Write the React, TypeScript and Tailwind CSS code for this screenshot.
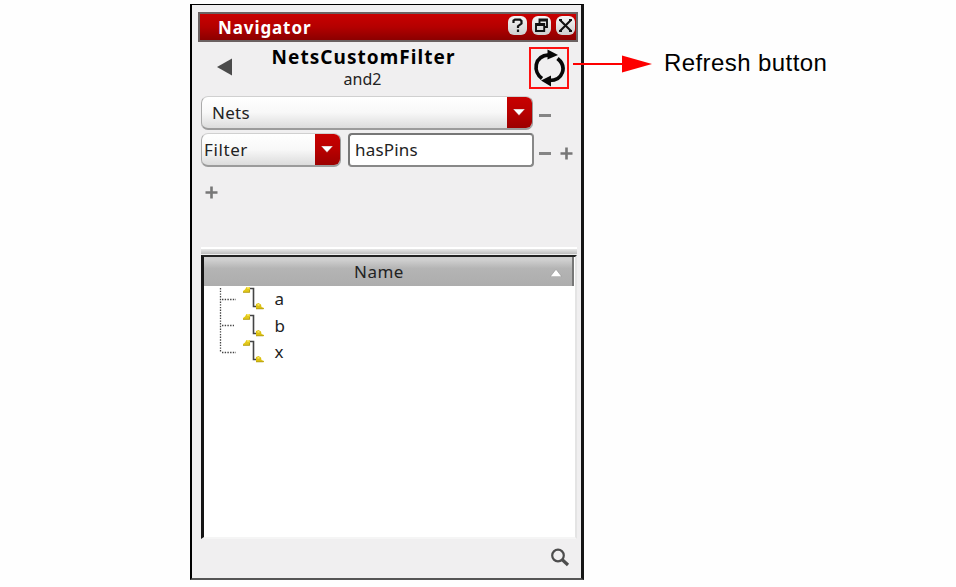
import React from "react";

function ComboArrow() {
  return (
    <div className="flex h-full w-[25px] shrink-0 items-center justify-center rounded-r-[6px] bg-linear-to-b from-[#c80000] via-[#b80000] to-[#9c0000]">
      <svg width="12" height="7" viewBox="0 0 12 7" className="-translate-x-px">
        <path d="M0 0H12L6 6.5Z" fill="#fff" stroke="#8a2020" strokeWidth="0.4" />
      </svg>
    </div>
  );
}

function Minus() {
  return <div className="h-[3px] w-[12px] bg-[#858585]" />;
}

function Plus() {
  return (
    <svg width="13" height="13" viewBox="0 0 13 13" className="block shrink-0">
      <path d="M0.5 6.5H12.5M6.5 0.5V12.5" stroke="#777" strokeWidth="2.6" />
    </svg>
  );
}

function TitleButton({ children }: { children: React.ReactNode }) {
  return (
    <div className="flex h-[19px] w-[19px] items-center justify-center rounded-[6px] bg-linear-to-b from-[#f6f6f6] to-[#cfcfcf]">
      <svg width="19" height="19" viewBox="0 0 19 19" fill="none" stroke="#111" strokeWidth="2">
        {children}
      </svg>
    </div>
  );
}

function NetIcon() {
  return (
    <svg width="22" height="26" viewBox="0 0 22 26" className="block shrink-0">
      <path d="M6.5 2.5H10.5V20.5H14" fill="none" stroke="#444" strokeWidth="1.6" />
      <path d="M0 6.5V5L2 3.5L3.5 1H7V6.5Z" fill="#e3c818" />
      <path d="M13 23V18L15.5 17L18 18.5L18.5 21L21 22V23Z" fill="#dcc010" />
      <path d="M4 1.8H6.5M14.5 18.8H16.5" stroke="#fff27a" strokeWidth="1.2" />
      <path d="M0 6.3H6.6V4M13 22.8H20.5" fill="none" stroke="#a99518" strokeWidth="0.8" />
    </svg>
  );
}

function Tree() {
  return (
    <div className="flex">
      <svg width="39" height="80" viewBox="0 0 39 80" className="block shrink-0">
        <path
          d="M16.5 2V66M18 13.5H32M18 39.5H30M18 66.5H32"
          fill="none"
          stroke="#444"
          strokeWidth="1.3"
          strokeDasharray="1.4 1.3"
        />
      </svg>
      <div className="flex flex-col">
        {["a", "b", "x"].map((name) => (
          <div key={name} className="flex h-[26.6px]">
            <NetIcon />
            <span className="ml-[9.5px] text-[17px] leading-[25px] text-[#222]">{name}</span>
          </div>
        ))}
      </div>
    </div>
  );
}

export default function App() {
  return (
    <div className="flex h-[587px] w-[956px] items-start overflow-hidden bg-[#fefefe] pt-[4px] pl-[190px] font-['Noto_Sans','Open_Sans',sans-serif] text-[#222]">
      <div className="flex h-[576px] w-[394px] shrink-0 flex-col border-t border-r-[3px] border-b-2 border-l-2 border-t-black border-r-[#161616] border-b-[#555] border-l-black bg-[#f0eff0] pt-[7px]">
        <div className="ml-[6px] flex h-[30px] w-[380px] items-center border-2 border-[#6b6262] bg-linear-to-b from-[#c90000] via-[#b40000] to-[#8b0000] pr-px pl-[18px]">
          <span className="text-[17px] leading-none font-bold tracking-[0.9px] text-white">Navigator</span>
          <div className="ml-auto flex -translate-y-[2px] gap-[5px]">
            <TitleButton>
              <path d="M5.5 7V4.6L7 3.6H12L13.5 5V7.5L10 10.2V12M10 13.5V16" strokeWidth="2.2" />
            </TitleButton>
            <TitleButton>
              <path d="M7.5 7V3.5H15V11H12.5M4 8H12.2V15H4ZM7 4.5H15.5M3.5 9H12.5" strokeWidth="1.9" />
            </TitleButton>
            <TitleButton>
              <path d="M4 4L15 15M15 4L4 15M3 4H6M13 4H16M3 15H6M13 15H16" strokeWidth="2.1" />
            </TitleButton>
          </div>
        </div>

        <div className="flex h-[54px] pt-[5px]">
          <svg width="16" height="18" viewBox="0 0 16 18" className="mt-[11px] ml-[25px] shrink-0">
            <path d="M0 9L15 0.5V17.5Z" fill="#4b4b4b" />
          </svg>
          <div className="ml-[23px] flex w-[215px] flex-col items-center">
            <span className="text-[19px] leading-[21px] font-bold tracking-[1.05px] text-black">NetsCustomFilter</span>
            <span className="-translate-x-px text-[16px] leading-[22px]">and2</span>
          </div>
          <div className="ml-[58px] flex h-[42px] w-[40px] shrink-0 items-center justify-center border-2 border-[#fd1010]">
            <svg width="36" height="38" viewBox="0 0 36 38" className="shrink-0" fill="none" stroke="#080808" strokeWidth="3.7">
              <path d="M11 29.5C2 23 2.5 7 18 5.8" />
              <path d="M26.5 9.5C36.5 17.5 32 31.5 18.5 31.5" />
              <path d="M16.5 0.5L27 6L16.5 10.5ZM20 26.5L10 31.5L20 37.5Z" fill="#080808" stroke="none" />
            </svg>
          </div>
        </div>

        <div className="ml-[9px] flex h-[34px] items-center">
          <div className="flex h-[34px] w-[332px] items-center rounded-[7px] border border-t-[#d0d0d0] border-r-[#999] border-b-2 border-b-[#9b9b9b] border-l-[#aaa] bg-linear-to-b from-white via-[#f8f8f8] to-[#dcdcdc]">
            <span className="ml-[10px] flex-1 text-[17px] leading-none tracking-[0.3px]">Nets</span>
            <ComboArrow />
          </div>
          <div className="mt-[5px] ml-[6px]">
            <Minus />
          </div>
        </div>

        <div className="mt-[3px] ml-[9px] flex h-[34px] items-center">
          <div className="flex h-[34px] w-[140px] items-center rounded-[7px] border border-t-[#d0d0d0] border-r-[#999] border-b-2 border-b-[#9b9b9b] border-l-[#aaa] bg-linear-to-b from-white via-[#f8f8f8] to-[#dcdcdc]">
            <span className="ml-[2px] flex-1 text-[17px] leading-none tracking-[0.6px]">Filter</span>
            <ComboArrow />
          </div>
          <div className="ml-[7px] flex h-[34px] w-[186px] items-center rounded-[4px] border-2 border-t-[#777] border-r-[#888] border-b-[#888] border-l-[#777] bg-white">
            <span className="ml-[5px] -translate-y-px text-[17px] leading-none tracking-[0.2px]">hasPins</span>
          </div>
          <div className="mt-[6px] ml-[5px] flex items-center gap-[9px]">
            <Minus />
            <Plus />
          </div>
        </div>

        <div className="mt-[19px] ml-[13px] h-[13px]">
          <Plus />
        </div>

        <div className="mt-[48px] ml-[9px] h-[8px] w-[376px] border-t-2 border-b border-t-white border-b-[#eee] bg-linear-to-b from-[#e8e8e8] to-[#bdbdbd]" />

        <div className="ml-[9px] h-[284px] w-[376px] border-t-2 border-r-2 border-b-2 border-l-[3px] border-t-[#222] border-r-[#e4e4e4] border-b-[#f5f5f5] border-l-[#151515] bg-white">
          <div className="flex h-[29px] w-[370px] items-center border-r-2 border-r-[#777] bg-linear-to-b from-[#cfcfcf] from-10% via-[#b4b4b4] via-40% to-[#adadad]">
            <span className="ml-[150px] text-[17px] leading-none tracking-[0.5px]">Name</span>
            <svg width="12" height="8" viewBox="0 0 12 8" className="mt-[2px] mr-[10px] ml-auto">
              <path d="M0.2 7.7L6 0.3L11.8 7.7Z" fill="#fff" stroke="#888" strokeWidth="0.5" />
            </svg>
          </div>
          <Tree />
        </div>

        <div className="mt-[9px] flex justify-end pr-[11px]">
          <svg width="20" height="19" viewBox="0 0 20 19" fill="none" stroke="#4d4d4d">
            <circle cx="8" cy="7.5" r="5.8" strokeWidth="2.2" />
            <path d="M12 11.5L18 17" strokeWidth="3.2" />
          </svg>
        </div>
      </div>

      <div className="-ml-[11px] flex items-center pt-[44px]">
        <svg width="79" height="18" viewBox="0 0 79 18" className="block shrink-0 translate-y-px">
          <path d="M0 9H50" stroke="#fd0000" strokeWidth="2" />
          <path d="M49 0.5L79 9L49 17.5Z" fill="#fd0000" />
        </svg>
        <span className="ml-[12px] font-['Liberation_Sans',sans-serif] text-[24px] leading-[30px] tracking-[0.42px] whitespace-nowrap text-black">
          Refresh button
        </span>
      </div>
    </div>
  );
}
